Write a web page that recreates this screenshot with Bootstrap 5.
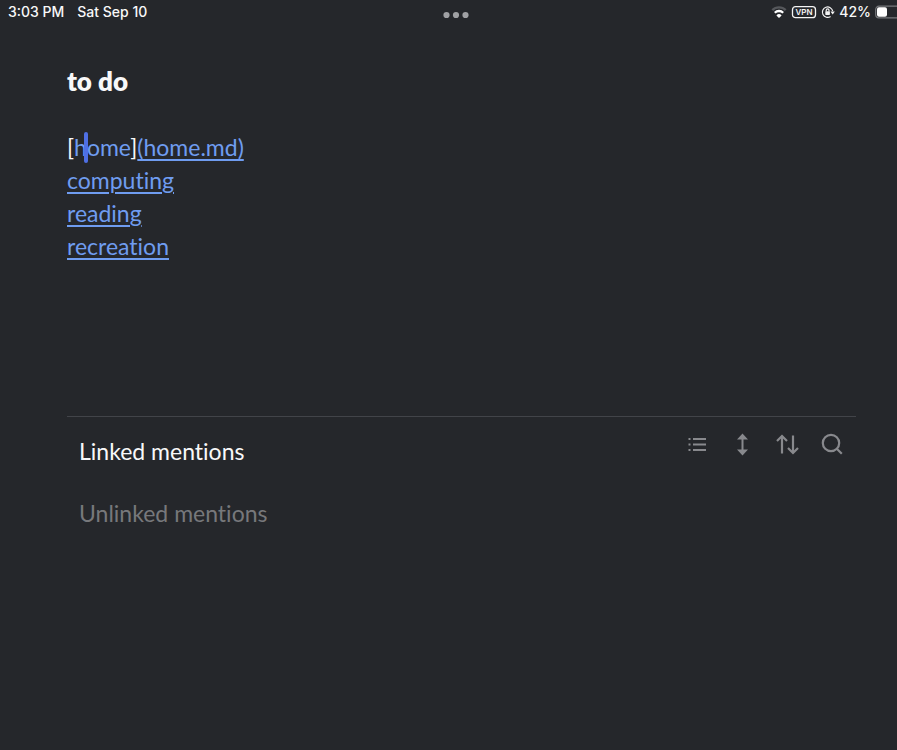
<!DOCTYPE html>
<html lang="en">
<head>
<meta charset="utf-8">
<meta name="viewport" content="width=device-width, initial-scale=1">
<title>to do</title>
<link href="https://cdn.jsdelivr.net/npm/bootstrap@5.3.0/dist/css/bootstrap.min.css" rel="stylesheet">
<style>
body { background: #25272b; color: #f8f8f9; font-family: Lato, sans-serif; }
.note-text, .mention-toggle { font-variant-ligatures: none; }
.status-bar { font: 500 14px/24px Inter, sans-serif; padding-left: 8px; }
.status-side { flex: 1 1 0; }
.status-times { gap: 13px; }
.menu-dots { color: #a0a1a4; padding: 6px 0 0 7px; }
.page-body { padding: 38px 41px 0 67px; }
.note-title { font-size: 26px; line-height: 38px; font-weight: 800; margin-bottom: 31px; }
.note-text { font-size: 23px; line-height: 33px; min-height: 285px; }
.note-text a, .link-label { color: #6f9cf0; }
.note-text a { text-decoration-thickness: 2px; text-underline-offset: 3px; }
.caret { position: absolute; right: -1px; top: -1px; width: 4px; height: 31px; border-radius: 2px; background: #4f6fe4; }
.mentions { border-top: 1px solid #424449; padding: 13px 12px 0; }
.mention-toggle { font-size: 23px; line-height: 42px; color: #f8f8f9; }
.mention-toggle.muted { color: #77787b; margin-top: 20px; }
.tool-row { gap: 21px; color: #88898d; }
.tool-row svg { display: block; }
</style>
<script src="https://cdn.jsdelivr.net/npm/bootstrap@5.3.0/dist/js/bootstrap.bundle.min.js"></script>
</head>
<body>
<header class="status-bar d-flex align-items-start overflow-hidden">
  <div class="status-side status-times d-flex">
    <span>3:03 PM</span><span>Sat Sep 10</span>
  </div>
  <button class="menu-dots btn border-0 lh-1" type="button" aria-label="Window menu">
    <svg class="d-block" width="26" height="16" viewBox="0 0 26 16" fill="currentColor"><circle cx="3.5" cy="9" r="3.1"/><circle cx="13" cy="9" r="3.1"/><circle cx="22.5" cy="9" r="3.1"/></svg>
  </button>
  <div class="status-side d-flex justify-content-end align-items-center">
    <svg class="me-1" width="16" height="14" viewBox="0 0 16 14" fill="none" stroke-width="2.3" role="img" aria-label="Wi-Fi"><path d="M1.3 5.1a9.5 9.5 0 0 1 13.4 0" stroke="#55575b"/><path d="M3.8 7.7a6 6 0 0 1 8.4 0" stroke="#fff"/><path d="M8 13 5.4 10.400a3.700 3.700 0 0 1 5.200 0z" fill="#fff"/></svg>
    <svg class="me-1" width="26" height="14" viewBox="0 0 26 14" role="img" aria-label="VPN"><rect x="1.5" y="1.7" width="23" height="11" rx="3" fill="none" stroke="#f4f4f4" stroke-width="1.3"/><text x="13" y="10.2" fill="#f4f4f4" text-anchor="middle" font-family="Inter, sans-serif" font-size="8" font-weight="600">VPN</text></svg>
    <svg width="14" height="14" viewBox="0 0 14 14" fill="none" stroke="#f4f4f4" stroke-width="1.2" role="img" aria-label="Rotation lock"><path d="M9.6 11.4A5.2 5.2 0 1 1 11.7 6.2"/><path d="M9.5 6.4h4.3l-2.1 3z" fill="#f4f4f4" stroke="none"/><rect x="4.3" y="6.3" width="4.6" height="3.6" rx=".6" fill="#f4f4f4" stroke="none"/><path d="M5.2 6.5V5.2a1.400 1.400 0 0 1 2.800 0v1.300"/></svg>
    <span class="ms-1">42%</span>
    <svg class="ms-1" width="22" height="14" viewBox="2 0 22 14" role="img" aria-label="Battery"><path d="M25 1.2H6A3.300 3.300 0 0 0 2.700 4.500v5A3.300 3.300 0 0 0 6 12.800h19" fill="none" stroke="#77797c" stroke-width="1.2"/><rect x="4" y="2.3" width="10" height="9.4" rx="2" fill="#fff"/></svg>
  </div>
</header>
<main class="page-body">
  <h1 class="note-title">to do</h1>
  <div class="note-text">
    <div>[<span class="link-label"><span class="position-relative">h<span class="caret"></span></span>ome</span>]<a href="home.md">(home.md)</a></div>
    <div><a href="computing.md">computing</a></div>
    <div><a href="reading.md">reading</a></div>
    <div><a href="recreation.md">recreation</a></div>
  </div>
  <section class="mentions">
    <div class="d-flex justify-content-between align-items-start">
      <button class="mention-toggle btn border-0 p-0" type="button">Linked mentions</button>
      <div class="tool-row d-flex">
        <button class="btn border-0 p-0 text-reset" type="button" aria-label="Collapse results"><svg width="24" height="28" viewBox="0 0 24 28" stroke="currentColor" stroke-width="2"><path d="M8 9h13M8 14.5h13M8 20h13M3.500 9h2M3.500 14.500h2M3.500 20h2"/></svg></button>
        <button class="btn border-0 p-0 text-reset" type="button" aria-label="Show more context"><svg width="24" height="28" viewBox="0 0 24 28" fill="currentColor"><path d="m12.500 3.500 5.500 6h-4.500v10H18l-5.500 6-5.500-6h4.500v-10H7z"/></svg></button>
        <button class="btn border-0 p-0 text-reset" type="button" aria-label="Change sort order"><svg width="24" height="28" viewBox="0 0 24 28" fill="none" stroke="currentColor" stroke-width="2.2"><path d="M7 23.500V6M2 11l5-5 5 5M18 5.500V23M13 18l5 5 5-5"/></svg></button>
        <button class="btn border-0 p-0 text-reset" type="button" aria-label="Show search filter"><svg width="24" height="28" viewBox="0 0 24 28" fill="none" stroke="currentColor" stroke-width="2.2"><circle cx="11" cy="13" r="8.2"/><path d="m16.800 18.800 5 5"/></svg></button>
      </div>
    </div>
    <button class="mention-toggle muted btn border-0 p-0 d-block" type="button">Unlinked mentions</button>
  </section>
</main>
</body>
</html>
